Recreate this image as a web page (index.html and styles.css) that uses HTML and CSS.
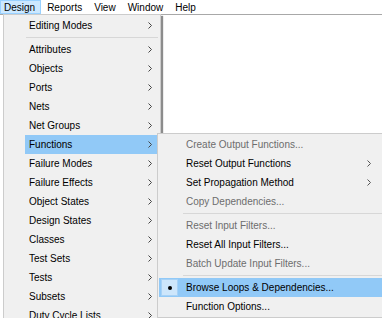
FILE: index.html
```html
<!DOCTYPE html>
<html lang="en">
<head>
    <meta charset="UTF-8">
    <title>Design menu</title>
    <link rel="stylesheet" href="styles.css">
</head>
<body>
    <div class="menubar">
        <span class="menubar-item open">Design</span>
        <span class="menubar-item">Reports</span>
        <span class="menubar-item">View</span>
        <span class="menubar-item">Window</span>
        <span class="menubar-item">Help</span>
    </div>

    <div class="workspace">
        <!-- Design drop-down -->
        <div class="menu menu-main">
            <div class="menu-item"><span class="label">Editing Modes</span><svg class="arrow" width="4" height="7" viewBox="0 0 4 7"><polyline points="0.5,0.5 3.5,3.5 0.5,6.5"/></svg></div>
            <div class="menu-sep"></div>
            <div class="menu-item"><span class="label">Attributes</span><svg class="arrow" width="4" height="7" viewBox="0 0 4 7"><polyline points="0.5,0.5 3.5,3.5 0.5,6.5"/></svg></div>
            <div class="menu-item"><span class="label">Objects</span><svg class="arrow" width="4" height="7" viewBox="0 0 4 7"><polyline points="0.5,0.5 3.5,3.5 0.5,6.5"/></svg></div>
            <div class="menu-item"><span class="label">Ports</span><svg class="arrow" width="4" height="7" viewBox="0 0 4 7"><polyline points="0.5,0.5 3.5,3.5 0.5,6.5"/></svg></div>
            <div class="menu-item"><span class="label">Nets</span><svg class="arrow" width="4" height="7" viewBox="0 0 4 7"><polyline points="0.5,0.5 3.5,3.5 0.5,6.5"/></svg></div>
            <div class="menu-item"><span class="label">Net Groups</span><svg class="arrow" width="4" height="7" viewBox="0 0 4 7"><polyline points="0.5,0.5 3.5,3.5 0.5,6.5"/></svg></div>
            <div class="menu-item active"><span class="label">Functions</span><svg class="arrow" width="4" height="7" viewBox="0 0 4 7"><polyline points="0.5,0.5 3.5,3.5 0.5,6.5"/></svg></div>
            <div class="menu-item"><span class="label">Failure Modes</span><svg class="arrow" width="4" height="7" viewBox="0 0 4 7"><polyline points="0.5,0.5 3.5,3.5 0.5,6.5"/></svg></div>
            <div class="menu-item"><span class="label">Failure Effects</span><svg class="arrow" width="4" height="7" viewBox="0 0 4 7"><polyline points="0.5,0.5 3.5,3.5 0.5,6.5"/></svg></div>
            <div class="menu-item"><span class="label">Object States</span><svg class="arrow" width="4" height="7" viewBox="0 0 4 7"><polyline points="0.5,0.5 3.5,3.5 0.5,6.5"/></svg></div>
            <div class="menu-item"><span class="label">Design States</span><svg class="arrow" width="4" height="7" viewBox="0 0 4 7"><polyline points="0.5,0.5 3.5,3.5 0.5,6.5"/></svg></div>
            <div class="menu-item"><span class="label">Classes</span><svg class="arrow" width="4" height="7" viewBox="0 0 4 7"><polyline points="0.5,0.5 3.5,3.5 0.5,6.5"/></svg></div>
            <div class="menu-item"><span class="label">Test Sets</span><svg class="arrow" width="4" height="7" viewBox="0 0 4 7"><polyline points="0.5,0.5 3.5,3.5 0.5,6.5"/></svg></div>
            <div class="menu-item"><span class="label">Tests</span><svg class="arrow" width="4" height="7" viewBox="0 0 4 7"><polyline points="0.5,0.5 3.5,3.5 0.5,6.5"/></svg></div>
            <div class="menu-item"><span class="label">Subsets</span><svg class="arrow" width="4" height="7" viewBox="0 0 4 7"><polyline points="0.5,0.5 3.5,3.5 0.5,6.5"/></svg></div>
            <div class="menu-item"><span class="label">Duty Cycle Lists</span><svg class="arrow" width="4" height="7" viewBox="0 0 4 7"><polyline points="0.5,0.5 3.5,3.5 0.5,6.5"/></svg></div>
        </div>

        <!-- Functions submenu -->
        <div class="menu menu-sub">
            <div class="menu-item disabled"><span class="check"></span><span class="label">Create Output Functions...</span></div>
            <div class="menu-item"><span class="check"></span><span class="label">Reset Output Functions</span><svg class="arrow" width="4" height="7" viewBox="0 0 4 7"><polyline points="0.5,0.5 3.5,3.5 0.5,6.5"/></svg></div>
            <div class="menu-item"><span class="check"></span><span class="label">Set Propagation Method</span><svg class="arrow" width="4" height="7" viewBox="0 0 4 7"><polyline points="0.5,0.5 3.5,3.5 0.5,6.5"/></svg></div>
            <div class="menu-item disabled"><span class="check"></span><span class="label">Copy Dependencies...</span></div>
            <div class="menu-sep"></div>
            <div class="menu-item disabled"><span class="check"></span><span class="label">Reset Input Filters...</span></div>
            <div class="menu-item"><span class="check"></span><span class="label">Reset All Input Filters...</span></div>
            <div class="menu-item disabled"><span class="check"></span><span class="label">Batch Update Input Filters...</span></div>
            <div class="menu-sep"></div>
            <div class="menu-item active checked"><span class="check"><span class="dot"></span></span><span class="label">Browse Loops &amp; Dependencies...</span></div>
            <div class="menu-item"><span class="check"></span><span class="label">Function Options...</span></div>
        </div>
    </div>
</body>
</html>
```

FILE: styles.css
```css
:root {
    --menu-bg: #f0f0f0;
    --menu-border: #cccccc;
    --hover: #91c9f7;
    --text: #000000;
    --disabled: #6d6d6d;
}

html, body {
    margin: 0;
    padding: 0;
    height: 100%;
    overflow: hidden;
}

body {
    font-family: "Liberation Sans", Arial, sans-serif;
    font-size: 10px;
    color: var(--text);
    background: #ffffff;
}

/* Menu bar */
.menubar {
    display: flex;
    height: 14px;
    background: #ffffff;
}

.menubar-item {
    display: flex;
    align-items: center;
    padding: 0 5px;
    height: 14px;
    box-sizing: border-box;
    border: 1px solid transparent;
}

.menubar-item:first-child {
    padding-left: 3px;
}

.menubar-item.open {
    background: #cce8ff;
    border-color: #99d1ff;
}

/* Window behind the menus */
.workspace {
    position: relative;
    height: calc(100% - 14px);
    border-top: 1px solid #a8a8a8;
    box-sizing: border-box;
}

/* Drop-down menus */
.menu {
    position: absolute;
    background: var(--menu-bg);
    border: 1px solid var(--menu-border);
    padding: 1px 0;
}

.menu-main {
    left: 3px;
    top: -1px;
    width: 156px;
    height: 330px;
    box-shadow: 2px 2px 1px rgba(0, 0, 0, 0.45);
}

.menu-sub {
    left: 157px;
    top: 118px;
    width: 240px;
    box-shadow: 2px 2px 2px rgba(0, 0, 0, 0.3);
}

.menu-item {
    display: flex;
    align-items: center;
    height: 19px;
}

.menu-main .menu-item {
    margin-left: 21px;
    padding-left: 4px;
}

.menu-sub .menu-item {
    margin-left: 1px;
    padding-left: 2px;
}

.menu-item.active {
    background: var(--hover);
}

.menu-item.disabled {
    color: var(--disabled);
}

.label {
    flex: 1;
    white-space: nowrap;
}

.arrow {
    fill: none;
    stroke: #444444;
    stroke-width: 1;
    margin-right: 8px;
}

.menu-sub .arrow {
    stroke: #555555;
    margin-right: 27px;
}

.menu-sep {
    height: 5px;
    display: flex;
    align-items: center;
}

.menu-sep::after {
    content: "";
    flex: 1;
    height: 1px;
    background: #d7d7d7;
}

.menu-main .menu-sep {
    margin-left: 22px;
    margin-right: 2px;
}

.menu-sub .menu-sep {
    margin-left: 25px;
}

/* Check / radio column in the submenu */
.check {
    width: 17px;
    height: 17px;
    margin-right: 8px;
    display: flex;
    align-items: center;
    justify-content: center;
    box-sizing: border-box;
}

.checked .check {
    background: #cde6fb;
    border: 1px solid #a8d2f6;
}

.dot {
    width: 4px;
    height: 4px;
    border-radius: 50%;
    background: #000000;
}
```
